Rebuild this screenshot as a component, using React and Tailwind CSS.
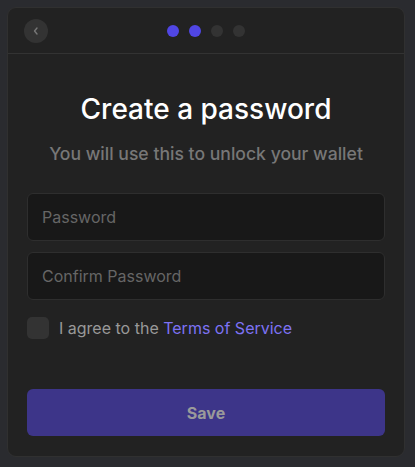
import React, { useState } from 'react';

const App = () => {
  const [agree, setAgree] = useState(false);
  const steps = [true, true, false, false];

  return (
    <div
      className="min-h-screen w-full bg-[#2a2b2f] p-[7px] pr-[10px]"
      style={{ fontFamily: 'Inter, "Noto Sans", sans-serif' }}
    >
      <div className="flex h-[450px] flex-col rounded-[9px] border border-[#303030] bg-[#222222]">
        <div className="relative flex h-[46px] items-center justify-center border-b border-[#333333]">
          <button className="absolute left-[16px] top-[11px] flex h-[24px] w-[24px] items-center justify-center rounded-full bg-[#333333] text-[#777]">
            <svg width="10" height="10" viewBox="0 0 10 10" fill="none">
              <path d="M6 2L3.5 5L6 8" stroke="currentColor" strokeWidth="1.4" strokeLinecap="round" strokeLinejoin="round" />
            </svg>
          </button>
          <div className="flex gap-[10px]">
            {steps.map((on, i) => (
              <span
                key={i}
                className={`h-[12px] w-[12px] rounded-full ${on ? 'bg-[#5046e4]' : 'bg-[#333333]'}`}
              />
            ))}
          </div>
        </div>

        <div className="flex flex-1 flex-col px-[19px] pb-[20px]">
          <h1 className="mt-[38px] text-center text-[28px] font-medium leading-[34px] text-white">
            Create a password
          </h1>
          <p className="mt-[16px] text-center text-[17.6px] font-medium leading-[24px] text-[#777777]">
            You will use this to unlock your wallet
          </p>

          <div className="mt-[27px] flex flex-col gap-[11px]">
            <input
              type="password"
              placeholder="Password"
              className="h-[48px] w-full rounded-[6px] border border-[#2e2e2e] bg-[#181818] px-[14px] text-[16px] text-white outline-none placeholder:text-[#666666]"
            />
            <input
              type="password"
              placeholder="Confirm Password"
              className="h-[48px] w-full rounded-[6px] border border-[#2e2e2e] bg-[#181818] px-[14px] text-[16px] text-white outline-none placeholder:text-[#666666]"
            />
          </div>

          <label className="mt-[16px] flex items-center gap-[10px]">
            <span
              onClick={() => setAgree(!agree)}
              className="h-[22px] w-[22px] cursor-pointer rounded-[5px] bg-[#333333]"
            />
            <span className="text-[16px] text-[#999999]">
              I agree to the <span className="text-[#7d72f4]">Terms of Service</span>
            </span>
          </label>

          <button className="mt-auto h-[47px] w-full rounded-[6px] bg-[#3d3589] text-[16px] font-bold text-[#9a9a9a]">
            Save
          </button>
        </div>
      </div>
    </div>
  );
};

export default App;
